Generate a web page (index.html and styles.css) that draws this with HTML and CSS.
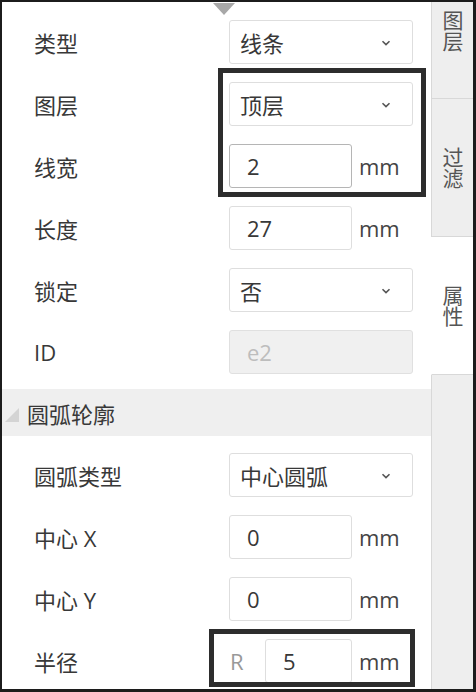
FILE: index.html
```html
<!DOCTYPE html>
<html lang="zh-CN">
<head>
<meta charset="utf-8">
<title>属性</title>
<link rel="stylesheet" href="styles.css">
</head>
<body>
<div class="frame">
  <div class="main">
    <div class="caret"></div>
    <div class="rows">
      <div class="row">
        <div class="label">类型</div>
        <div class="select"><span>线条</span><svg class="chev" width="10" height="6" viewBox="0 0 10 6"><path d="M1.5 1.2 L5 4.6 L8.5 1.2" fill="none" stroke="#555" stroke-width="1.6"/></svg></div>
      </div>
      <div class="row">
        <div class="label">图层</div>
        <div class="select"><span>顶层</span><svg class="chev" width="10" height="6" viewBox="0 0 10 6"><path d="M1.5 1.2 L5 4.6 L8.5 1.2" fill="none" stroke="#555" stroke-width="1.6"/></svg></div>
      </div>
      <div class="row">
        <div class="label">线宽</div>
        <div class="unit-field"><div class="input focus">2</div><span class="unit">mm</span></div>
      </div>
      <div class="row">
        <div class="label">长度</div>
        <div class="unit-field"><div class="input">27</div><span class="unit">mm</span></div>
      </div>
      <div class="row">
        <div class="label">锁定</div>
        <div class="select"><span>否</span><svg class="chev" width="10" height="6" viewBox="0 0 10 6"><path d="M1.5 1.2 L5 4.6 L8.5 1.2" fill="none" stroke="#555" stroke-width="1.6"/></svg></div>
      </div>
      <div class="row">
        <div class="label latin">ID</div>
        <div class="input disabled">e2</div>
      </div>
    </div>
    <div class="section">
      <svg class="sec-icon" width="14" height="14" viewBox="0 0 14 14"><polygon points="14,0 14,14 0,14" fill="#d4d4d4"/></svg>
      <span>圆弧轮廓</span>
    </div>
    <div class="rows rows-2">
      <div class="row">
        <div class="label">圆弧类型</div>
        <div class="select"><span>中心圆弧</span><svg class="chev" width="10" height="6" viewBox="0 0 10 6"><path d="M1.5 1.2 L5 4.6 L8.5 1.2" fill="none" stroke="#555" stroke-width="1.6"/></svg></div>
      </div>
      <div class="row">
        <div class="label">中心 X</div>
        <div class="unit-field"><div class="input">0</div><span class="unit">mm</span></div>
      </div>
      <div class="row">
        <div class="label">中心 Y</div>
        <div class="unit-field"><div class="input">0</div><span class="unit">mm</span></div>
      </div>
      <div class="row">
        <div class="label">半径</div>
        <div class="unit-field"><span class="addon">R</span><div class="input short">5</div><span class="unit">mm</span></div>
      </div>
    </div>
    <div class="mark mark-1"></div>
    <div class="mark mark-2"></div>
  </div>
  <div class="tabs">
    <div class="tab tab-first"><span class="vt">图层</span></div>
    <div class="tab"><span class="vt">过滤</span></div>
    <div class="tab active"><span class="vt">属性</span></div>
    <div class="tab-rest"></div>
  </div>
</div>
</body>
</html>
```
FILE: styles.css
```css
* { box-sizing: border-box; }
html, body { margin: 0; padding: 0; background: #fff; }
body {
  font-family: "Open Sans", "Noto Sans CJK SC", sans-serif;
  font-size: 22px;
  color: #383838;
}
.frame {
  width: 476px;
  height: 692px;
  border-style: solid;
  border-color: #1c1c1c;
  border-width: 2px 3px 3px 2px;
  display: flex;
  overflow: hidden;
}
.main {
  position: relative;
  flex: 1;
  background: #fff;
  overflow: hidden;
}
.caret {
  position: absolute;
  left: 211px;
  top: 1px;
  width: 0;
  height: 0;
  border-left: 11px solid transparent;
  border-right: 11px solid transparent;
  border-top: 12px solid #a8a8a8;
}
.rows { padding: 9px 0 0 32px; }
.rows-2 { padding-top: 8px; }
.row {
  display: grid;
  grid-template-columns: 195px 184px;
  align-items: center;
  height: 62px;
}
.label { color: #383838; white-space: nowrap; }
.select {
  height: 44px;
  border: 1px solid #dedede;
  border-radius: 3px;
  display: flex;
  align-items: center;
  justify-content: space-between;
  padding: 0 21px 0 10px;
  background: #fff;
}
.chev { display: block; margin-top: 2px; }
.unit-field {
  display: flex;
  align-items: center;
  height: 44px;
}
.input {
  height: 44px;
  border: 1px solid #dedede;
  border-radius: 3px;
  display: flex;
  align-items: center;
  padding-left: 17px;
  background: #fff;
  width: 123px;
}
.input.focus { border-color: #b5b5b5; }
.input.short { width: 87px; }
.input.disabled {
  width: 184px;
  background: #f0f0f0;
  color: #bdbdbd;
  border-color: #e0e0e0;
}
.unit { margin-left: 7px; color: #444; }
.addon { width: 36px; color: #999; padding-left: 1px; }
.section {
  margin-top: 6px;
  height: 47px;
  background: #efefef;
  display: flex;
  align-items: center;
  padding-left: 3px;
}
.sec-icon { display: block; margin-right: 8px; margin-top: 4px; }
.mark {
  position: absolute;
  border: 5px solid #2d2d2d;
  pointer-events: none;
}
.mark-1 { left: 216px; top: 66px; width: 208px; height: 129px; }
.mark-2 { left: 207px; top: 627px; width: 206px; height: 58px; }
.tabs {
  width: 42px;
  display: flex;
  flex-direction: column;
  background: #eeeeee;
}
.tab {
  height: 138px;
  display: flex;
  flex-direction: column;
  align-items: center;
  justify-content: center;
  color: #555;
  font-size: 21px;
  border-left: 1px solid #d8d8d8;
  border-bottom: 1px solid #d8d8d8;
  padding-right: 1px;
}
.vt {
  writing-mode: vertical-rl;
  text-orientation: upright;
  line-height: 22px;
  letter-spacing: 0;
}
.tab-first {
  height: 97px;
  justify-content: flex-start;
  padding-top: 8px;
}
.tab.active {
  background: #fff;
  border-left-color: #fff;
}
.tab-rest {
  flex: 1;
  border-left: 1px solid #d8d8d8;
}
```
